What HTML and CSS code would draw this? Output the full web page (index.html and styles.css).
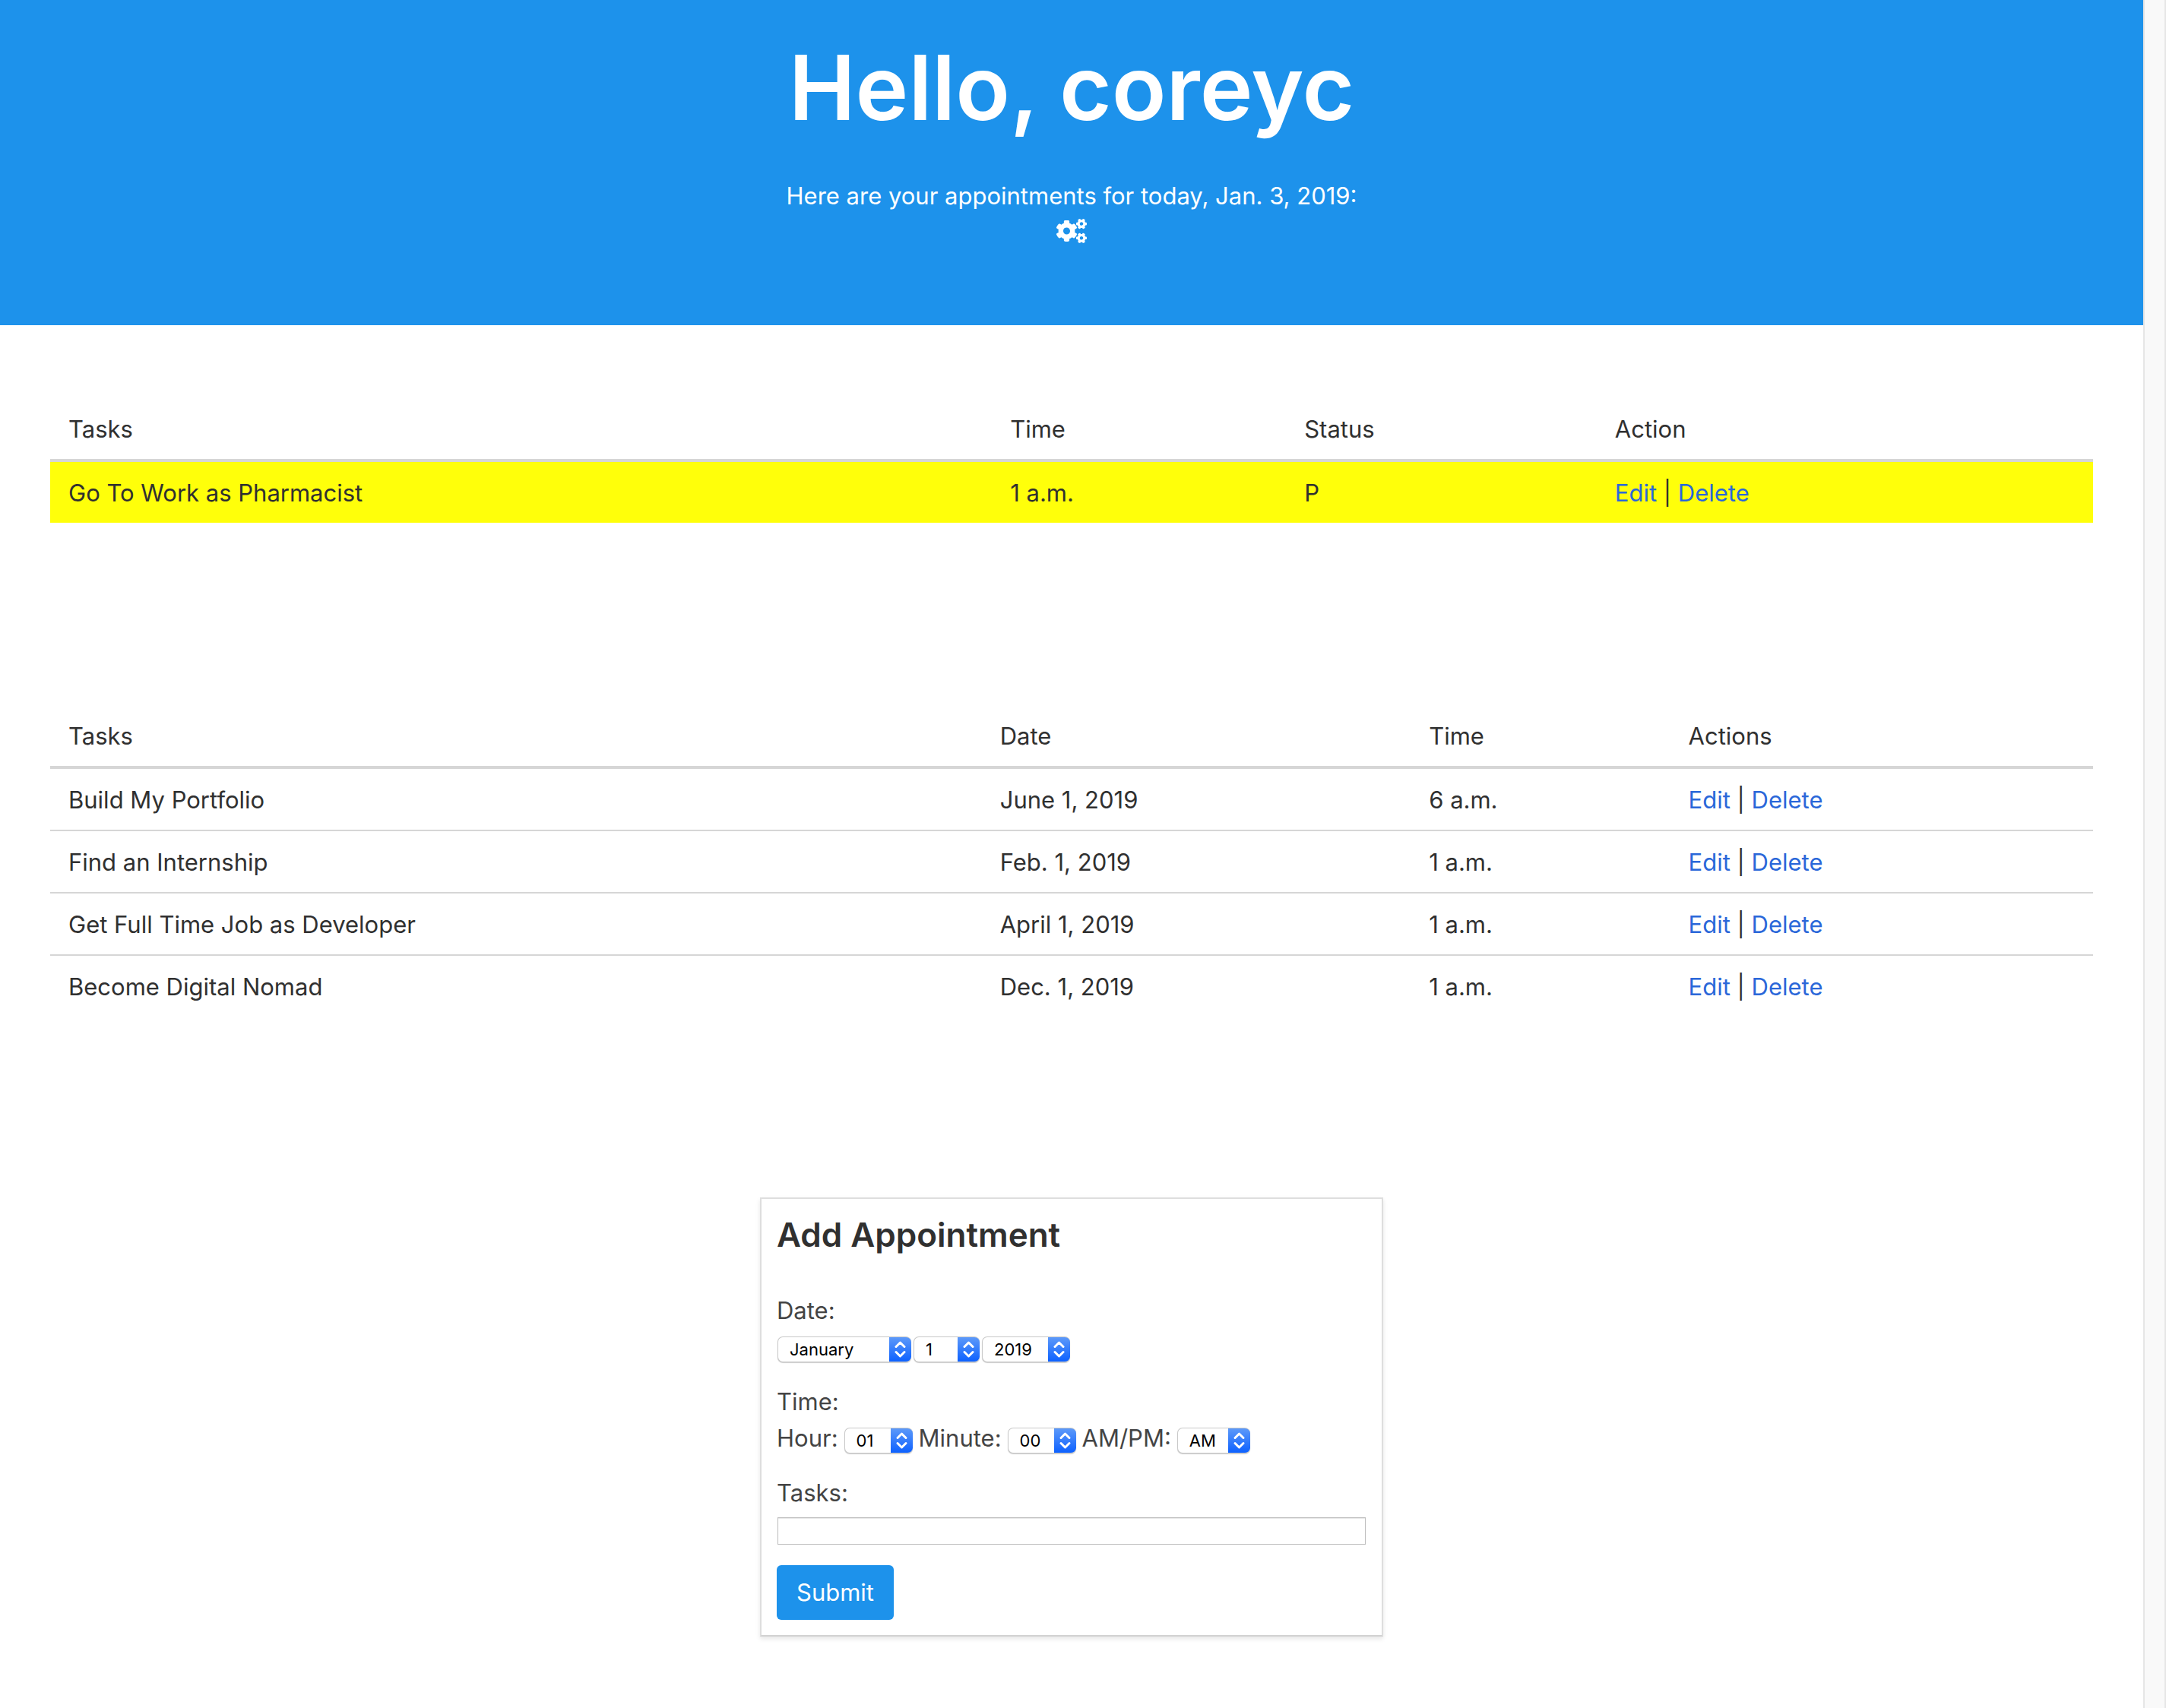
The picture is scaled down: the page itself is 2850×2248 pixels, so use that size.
FILE: index.html
```html
<!DOCTYPE html>
<html lang="en">
<head>
  <meta charset="utf-8">
  <meta name="viewport" content="width=device-width, initial-scale=1">
  <title>Appointments</title>
  <link rel="stylesheet" href="styles.css">
</head>
<body>
  <div class="page">
    <header class="hero">
      <h1 class="hero-title">Hello, coreyc</h1>
      <p class="hero-text">Here are your appointments for today, Jan. 3, 2019:</p>
      <p class="hero-icon">
        <svg class="cogs" viewBox="0 0 640 512" aria-hidden="true">
          <defs>
            <path id="small-cog" d="M512.1 191l-8.2 14.3c-3 5.3-9.4 7.5-15.1 5.4-11.8-4.4-22.6-10.7-32.1-18.6-4.6-3.8-5.8-10.5-2.8-15.7l8.2-14.3c-6.9-8-12.3-17.3-15.9-27.4h-16.5c-6 0-11.2-4.3-12.2-10.3-2-12-2.1-24.6 0-37.1 1-6 6.2-10.4 12.2-10.4h16.5c3.6-10.1 9-19.4 15.9-27.4l-8.2-14.3c-3-5.2-1.9-11.9 2.8-15.7 9.5-7.9 20.4-14.2 32.1-18.6 5.7-2.1 12.1.1 15.1 5.4l8.2 14.3c10.5-1.9 21.2-1.9 31.7 0L552 6.3c3-5.3 9.4-7.5 15.1-5.4 11.8 4.4 22.6 10.7 32.1 18.6 4.6 3.8 5.8 10.5 2.8 15.7l-8.2 14.3c6.9 8 12.3 17.3 15.9 27.4h16.5c6 0 11.2 4.3 12.2 10.3 2 12 2.1 24.6 0 37.1-1 6-6.2 10.4-12.2 10.4h-16.5c-3.6 10.1-9 19.4-15.9 27.4l8.2 14.3c3 5.2 1.9 11.9-2.8 15.7-9.5 7.9-20.4 14.2-32.1 18.6-5.7 2.1-12.1-.1-15.1-5.4l-8.2-14.3c-10.4 1.9-21.2 1.9-31.7 0zm-10.5-58.8c38.5 29.6 82.4-14.3 52.8-52.8-38.5-29.7-82.4 14.3-52.8 52.8z"/>
          </defs>
          <use href="#small-cog"/>
          <use href="#small-cog" transform="translate(0 299)"/>
          <path d="M386.3 286.1l33.7 16.8c10.1 5.8 14.5 18.1 10.5 29.1-8.9 24.2-26.4 46.4-42.6 65.8-7.4 8.9-20.2 11.1-30.3 5.3l-29.1-16.8c-16 13.7-34.6 24.6-54.9 31.7v33.6c0 11.6-8.3 21.6-19.7 23.6-24.6 4.2-50.4 4.4-75.9 0-11.5-2-20-11.9-20-23.6V418c-20.3-7.2-38.9-18-54.9-31.7L74 403c-10 5.8-22.9 3.6-30.3-5.3-16.2-19.4-33.3-41.6-42.2-65.7-4-10.9.4-23.2 10.5-29.1l33.3-16.8c-3.9-20.9-3.9-42.4 0-63.4L12 205.8c-10.1-5.8-14.6-18.1-10.5-29 8.9-24.2 26-46.4 42.2-65.8 7.4-8.9 20.2-11.1 30.3-5.3l29.1 16.8c16-13.7 34.6-24.6 54.9-31.7V57.1c0-11.5 8.2-21.5 19.6-23.5 24.6-4.2 50.5-4.4 76-.1 11.5 2 20 11.9 20 23.6v33.6c20.3 7.2 38.9 18 54.9 31.7l29.1-16.8c10-5.8 22.9-3.6 30.3 5.3 16.2 19.4 33.2 41.6 42.1 65.8 4 10.9.1 23.2-10 29.1l-33.7 16.8c3.9 21 3.9 42.5 0 63.5zm-117.6 21.1c59.2-77-28.7-164.9-105.7-105.7-59.2 77 28.7 164.9 105.7 105.7z"/>
        </svg>
      </p>
    </header>

    <main class="content">
      <table class="table today">
        <colgroup><col class="today-task"><col class="today-time"><col class="today-status"><col class="today-action"></colgroup>
        <thead>
          <tr><th>Tasks</th><th>Time</th><th>Status</th><th>Action</th></tr>
        </thead>
        <tbody>
          <tr class="pending"><td>Go To Work as Pharmacist</td><td>1 a.m.</td><td>P</td><td><a href="#edit">Edit</a> | <a href="#delete">Delete</a></td></tr>
        </tbody>
      </table>

      <table class="table upcoming">
        <colgroup><col class="up-task"><col class="up-date"><col class="up-time"><col class="up-action"></colgroup>
        <thead>
          <tr><th>Tasks</th><th>Date</th><th>Time</th><th>Actions</th></tr>
        </thead>
        <tbody>
          <tr><td>Build My Portfolio</td><td>June 1, 2019</td><td>6 a.m.</td><td><a href="#edit">Edit</a> | <a href="#delete">Delete</a></td></tr>
          <tr><td>Find an Internship</td><td>Feb. 1, 2019</td><td>1 a.m.</td><td><a href="#edit">Edit</a> | <a href="#delete">Delete</a></td></tr>
          <tr><td>Get Full Time Job as Developer</td><td>April 1, 2019</td><td>1 a.m.</td><td><a href="#edit">Edit</a> | <a href="#delete">Delete</a></td></tr>
          <tr><td>Become Digital Nomad</td><td>Dec. 1, 2019</td><td>1 a.m.</td><td><a href="#edit">Edit</a> | <a href="#delete">Delete</a></td></tr>
        </tbody>
      </table>

      <form class="card">
        <h2 class="card-title">Add Appointment</h2>
        <div class="fields">
          <div class="field">
            <label for="month">Date:</label>
            <div class="controls dates">
              <select id="month" class="select month"><option>January</option></select>
              <select class="select day" aria-label="Day"><option>1</option></select>
              <select class="select year" aria-label="Year"><option>2019</option></select>
            </div>
          </div>
          <div class="field">
            <span>Time:</span>
            <div class="controls times">
              <label for="hour">Hour:</label>
              <select id="hour" class="select number"><option>01</option></select>
              <label for="minute">Minute:</label>
              <select id="minute" class="select number"><option>00</option></select>
              <label for="meridiem">AM/PM:</label>
              <select id="meridiem" class="select meridiem"><option>AM</option></select>
            </div>
          </div>
          <div class="field">
            <label for="tasks">Tasks:</label>
            <div class="controls"><input id="tasks" class="input" type="text"></div>
          </div>
        </div>
        <button class="submit" type="button">Submit</button>
      </form>
    </main>
  </div>
  <div class="scroll-track"></div>
</body>
</html>
```
FILE: styles.css
```css
* {
  box-sizing: border-box;
}

body {
  margin: 0;
  min-height: 100vh;
  display: grid;
  grid-template-columns: minmax(0, 1fr) 30px;
  background: #fff;
  color: #303030;
  font: 400 31px/48px Inter, "Liberation Sans", sans-serif;
}

h1, h2, p {
  margin: 0;
}

.scroll-track {
  background: #f9f9f9;
  border: solid #e6e6e6;
  border-width: 0 2px;
}

/* Greeting */
.hero {
  padding: 48px 24px 102px;
  background: #1d92eb;
  color: #fff;
  text-align: center;
}

.hero-title {
  margin-bottom: 52px;
  font-size: 118px;
  font-weight: 600;
  line-height: 134px;
}

.hero-icon {
  display: flex;
  justify-content: center;
  align-items: center;
  height: 44px;
}

.cogs {
  width: 40px;
  height: 32px;
  fill: currentColor;
}

/* Appointment lists */
.content {
  padding: 96px 66px 94px;
}

.table {
  width: 100%;
  table-layout: fixed;
  border-spacing: 0;
}

.today {
  margin-bottom: 240px;
}

.upcoming {
  margin-bottom: 238px;
}

.table th,
.table td {
  padding: 17px 24px 15px;
  text-align: left;
  font-weight: 400;
}

.table th {
  border-bottom: 4px solid #d6d6d6;
}

.table td {
  border-bottom: 2px solid #d6d6d6;
}

.table tr:last-child td {
  border-bottom: 0;
}

.pending {
  background: #ffff0a;
}

.table a {
  color: #2a67d9;
  text-decoration: none;
}

.today-task { width: 46.1%; }
.today-time { width: 14.4%; }
.today-status { width: 15.2%; }
.today-action { width: 24.3%; }

.up-task { width: 45.6%; }
.up-date { width: 21%; }
.up-time { width: 12.7%; }
.up-action { width: 20.7%; }

/* New appointment form */
.card {
  max-width: 820px;
  margin: 0 auto;
  padding: 20px;
  border: 2px solid #dedede;
  border-bottom-color: #d2d2d2;
  box-shadow: 0 3px 6px rgba(0, 0, 0, 0.1);
  color: #444;
}

.card-title {
  margin-bottom: 49px;
  color: #303030;
  font-size: 44px;
  font-weight: 600;
  line-height: 54px;
}

.fields {
  display: grid;
  gap: 24px;
  margin-bottom: 23px;
}

.field label,
.field span {
  display: block;
}

.controls {
  display: flex;
  align-items: center;
  height: 48px;
}

.dates {
  gap: 3px;
  padding-left: 1px;
}

.times {
  gap: 8px;
}

.select {
  appearance: none;
  height: 34px;
  margin: 6px 0 0;
  padding: 0 30px 0 15px;
  border: 1px solid #c9c9c9;
  border-right: 0;
  border-radius: 7px;
  background:
    url("data:image/svg+xml,%3Csvg xmlns='http://www.w3.org/2000/svg' viewBox='0 0 29 34' fill='none' stroke='white' stroke-width='3' stroke-linecap='round' stroke-linejoin='round'%3E%3Cpath d='M9 13.500l5.500-5.500 5.500 5.500M9 20.500l5.500 5.500 5.500-5.500'/%3E%3C/svg%3E") right / 29px 34px no-repeat border-box,
    linear-gradient(#5f9bf9, #0a5fff) right / 29px 100% no-repeat border-box,
    #fff;
  box-shadow: 0 1px 1px rgba(0, 0, 0, 0.2);
  color: #000;
  font: 400 22px/30px Inter, "Liberation Sans", sans-serif;
}

.month { width: 176px; }
.day { width: 87px; }
.year { width: 116px; }
.number { width: 90px; }
.meridiem { width: 96px; }

.input {
  flex: 1;
  min-width: 0;
  height: 36px;
  margin: 4px 1px 0;
  padding: 0 6px;
  border: 1px solid #bdbdbd;
  box-shadow: inset 0 1px 1px #e6e6e6;
  font: inherit;
  font-size: 22px;
}

.submit {
  display: block;
  height: 72px;
  padding: 0 26px;
  border: 0;
  border-radius: 6px;
  background: #1d92eb;
  color: #fff;
  font: inherit;
}
```
